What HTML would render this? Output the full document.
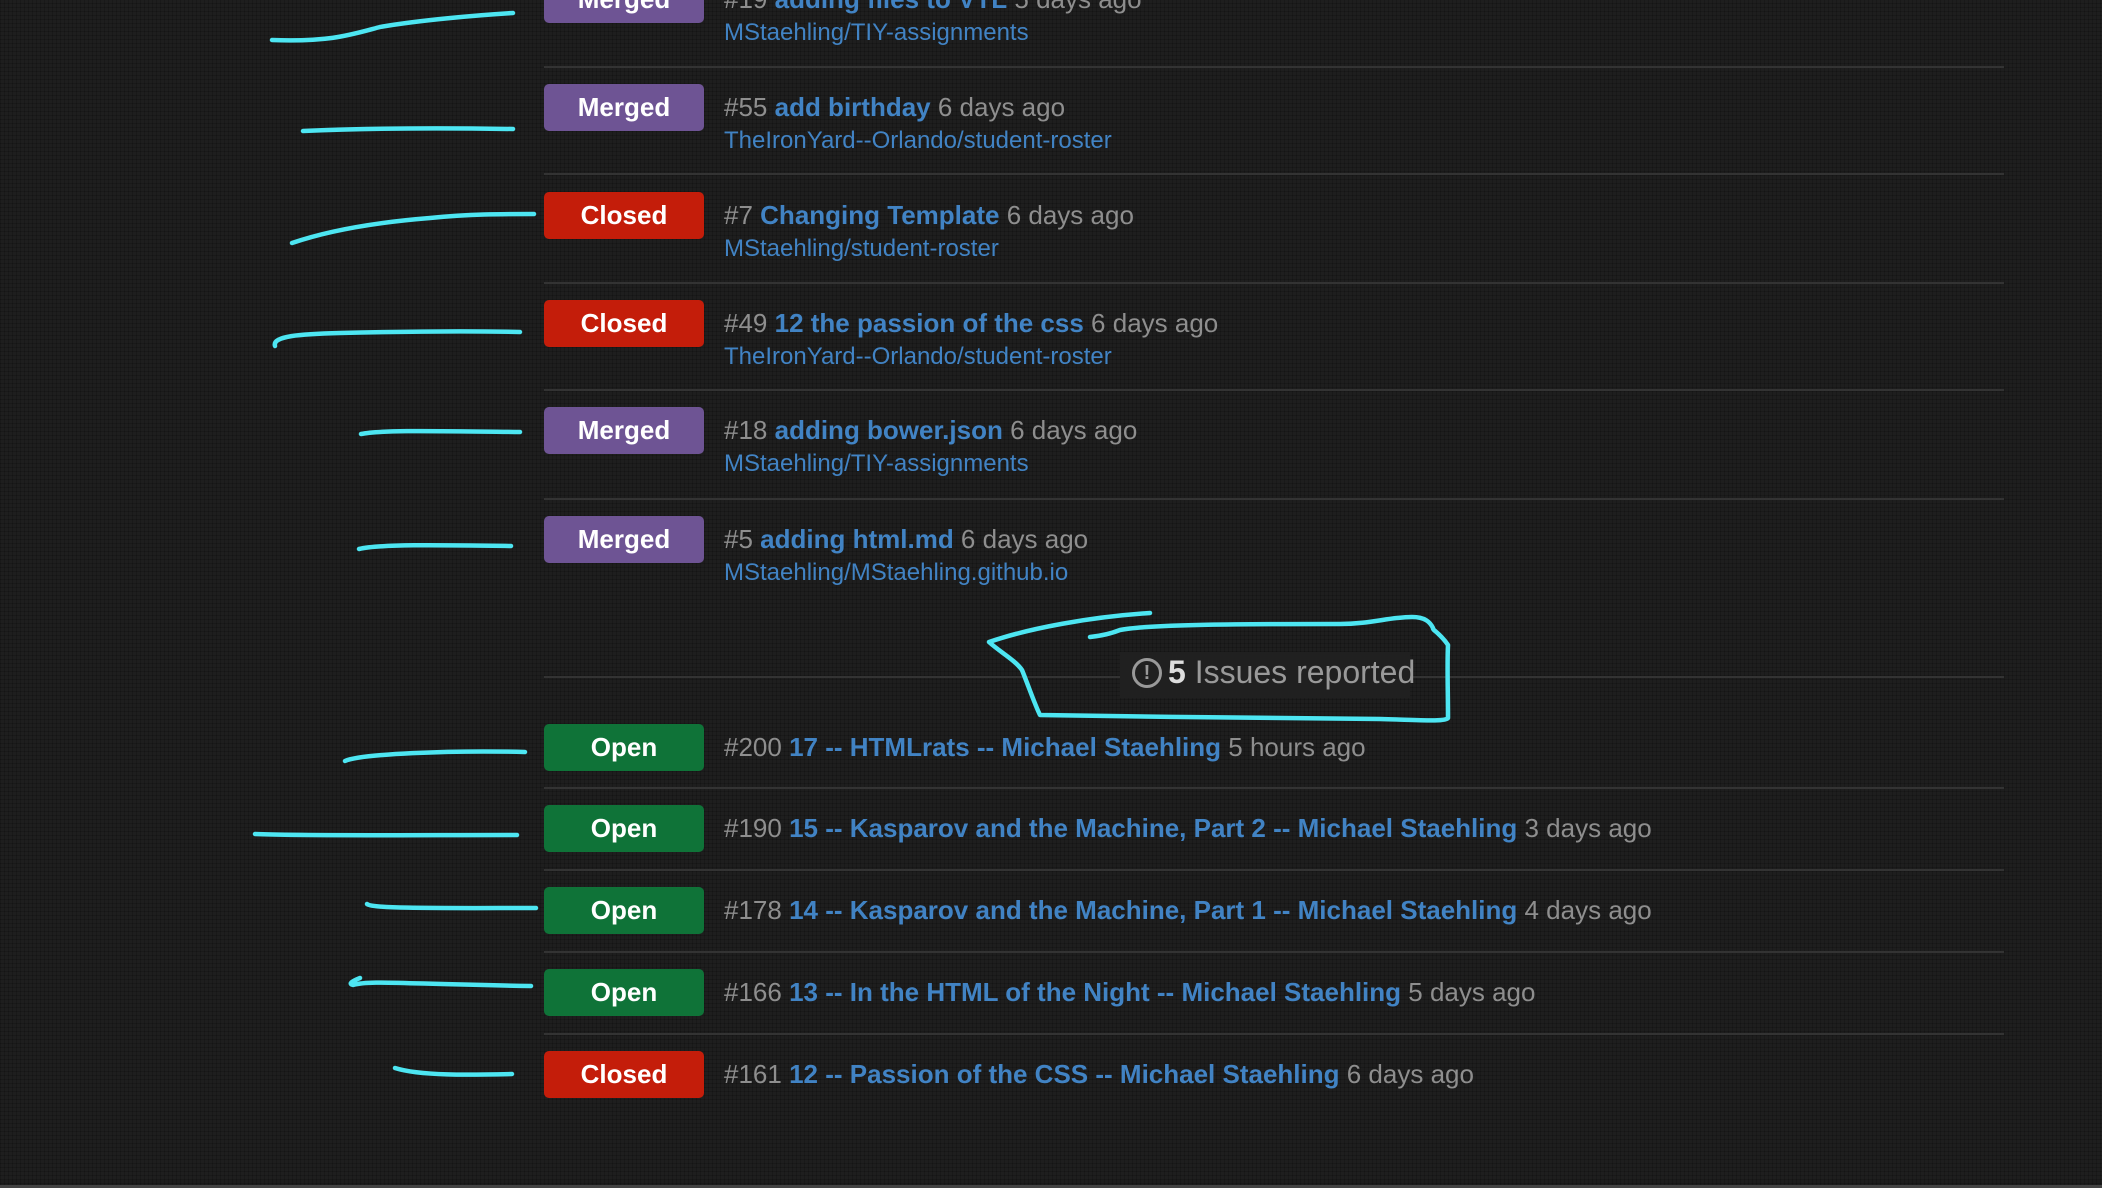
<!DOCTYPE html>
<html><head><meta charset="utf-8"><style>
html,body{margin:0;padding:0}
body{width:2102px;height:1188px;overflow:hidden;position:relative;background:#1e1e1e;
background-image:repeating-linear-gradient(0deg,rgba(0,0,0,.18) 0 1px,transparent 1px 4px),repeating-linear-gradient(90deg,rgba(0,0,0,.18) 0 1px,transparent 1px 4px);
font-family:"Liberation Sans",Arial,sans-serif}
.b{position:absolute;left:544px;width:160px;height:47px;border-radius:5px;color:#fff;font-weight:bold;font-size:26px;line-height:47px;text-align:center}
.m{background:#6e5494}.c{background:#c41d0a}.o{background:#0f7338}
.sep{position:absolute;left:544px;width:1460px;height:2px;background:#333}
.t{position:absolute;left:724px;font-size:26px;color:#8e8e8e;white-space:nowrap;line-height:30px}
.t b{color:#4183c4}
.r{position:absolute;left:724px;font-size:24px;color:#4183c4;white-space:nowrap;line-height:28px}
</style></head><body>
<div class="b m" style="top:-24px">Merged</div>
<div class="t" style="top:-16px">#19 <b>adding files to VTL</b> 5 days ago</div>
<div class="r" style="top:19px">MStaehling/TIY-assignments</div>
<div class="sep" style="top:66px"></div>

<div class="b m" style="top:84px">Merged</div>
<div class="t" style="top:92px">#55 <b>add birthday</b> 6 days ago</div>
<div class="r" style="top:127px">TheIronYard--Orlando/student-roster</div>
<div class="sep" style="top:173px"></div>

<div class="b c" style="top:192px">Closed</div>
<div class="t" style="top:200px">#7 <b>Changing Template</b> 6 days ago</div>
<div class="r" style="top:235px">MStaehling/student-roster</div>
<div class="sep" style="top:282px"></div>

<div class="b c" style="top:300px">Closed</div>
<div class="t" style="top:308px">#49 <b>12 the passion of the css</b> 6 days ago</div>
<div class="r" style="top:343px">TheIronYard--Orlando/student-roster</div>
<div class="sep" style="top:389px"></div>

<div class="b m" style="top:407px">Merged</div>
<div class="t" style="top:415px">#18 <b>adding bower.json</b> 6 days ago</div>
<div class="r" style="top:450px">MStaehling/TIY-assignments</div>
<div class="sep" style="top:498px"></div>

<div class="b m" style="top:516px">Merged</div>
<div class="t" style="top:524px">#5 <b>adding html.md</b> 6 days ago</div>
<div class="r" style="top:559px">MStaehling/MStaehling.github.io</div>

<div class="sep" style="top:676px"></div>
<div style="position:absolute;left:1120px;top:652px;width:290px;height:46px;background:#202020"></div>
<div style="position:absolute;left:1132px;top:658px;width:24px;height:24px;border:3px solid #999;border-radius:50%;color:#999;font-weight:bold;font-size:20px;line-height:24px;text-align:center">!</div>
<div style="position:absolute;left:1168px;top:652px;font-size:32px;color:#999;line-height:40px;white-space:nowrap"><b style="color:#ddd">5</b> Issues reported</div>

<div class="b o" style="top:724px">Open</div>
<div class="t" style="top:732px">#200 <b>17 -- HTMLrats -- Michael Staehling</b> 5 hours ago</div>
<div class="sep" style="top:787px"></div>
<div class="b o" style="top:805px">Open</div>
<div class="t" style="top:813px">#190 <b>15 -- Kasparov and the Machine, Part 2 -- Michael Staehling</b> 3 days ago</div>
<div class="sep" style="top:869px"></div>
<div class="b o" style="top:887px">Open</div>
<div class="t" style="top:895px">#178 <b>14 -- Kasparov and the Machine, Part 1 -- Michael Staehling</b> 4 days ago</div>
<div class="sep" style="top:951px"></div>
<div class="b o" style="top:969px">Open</div>
<div class="t" style="top:977px">#166 <b>13 -- In the HTML of the Night -- Michael Staehling</b> 5 days ago</div>
<div class="sep" style="top:1033px"></div>
<div class="b c" style="top:1051px">Closed</div>
<div class="t" style="top:1059px">#161 <b>12 -- Passion of the CSS -- Michael Staehling</b> 6 days ago</div>

<div style="position:absolute;left:0;top:1185px;width:2102px;height:3px;background:#444"></div>

<svg width="2102" height="1188" style="position:absolute;left:0;top:0" fill="none" stroke="#4de6f2" stroke-width="4.5" stroke-linecap="round" stroke-linejoin="round">
<path d="M272 40 C330 42 350 35 380 27 C420 20 480 15 513 13"/>
<path d="M303 131 C370 128 450 128 513 129"/>
<path d="M292 243 C330 230 380 222 430 218 C470 214 500 214 534 214"/>
<path d="M275 346 C272 336 300 334 340 333 C420 331 480 331 520 332"/>
<path d="M361 434 C380 430 430 431 520 432"/>
<path d="M359 549 C380 544 440 545 511 546"/>
<path d="M1150 613 C1090 617 1030 628 989 642 C1000 652 1015 660 1022 670 C1030 690 1035 705 1040 715 C1150 717 1300 718 1380 719 C1420 720 1445 722 1448 718 C1448 690 1447 665 1448 645 C1440 633 1432 630 1433 628 C1430 622 1425 617 1412 617 C1390 617 1370 624 1340 624 C1250 624 1150 624 1120 630 C1110 634 1100 636 1090 637"/>
<path d="M345 761 C360 754 450 750 525 752"/>
<path d="M255 834 C300 836 420 835 517 835"/>
<path d="M367 904 C372 909 450 908 536 908"/>
<path d="M360 978 C350 982 349 984 353 985 C370 980 400 984 531 986"/>
<path d="M395 1068 C420 1076 470 1075 512 1074"/>
</svg>
</body></html>
